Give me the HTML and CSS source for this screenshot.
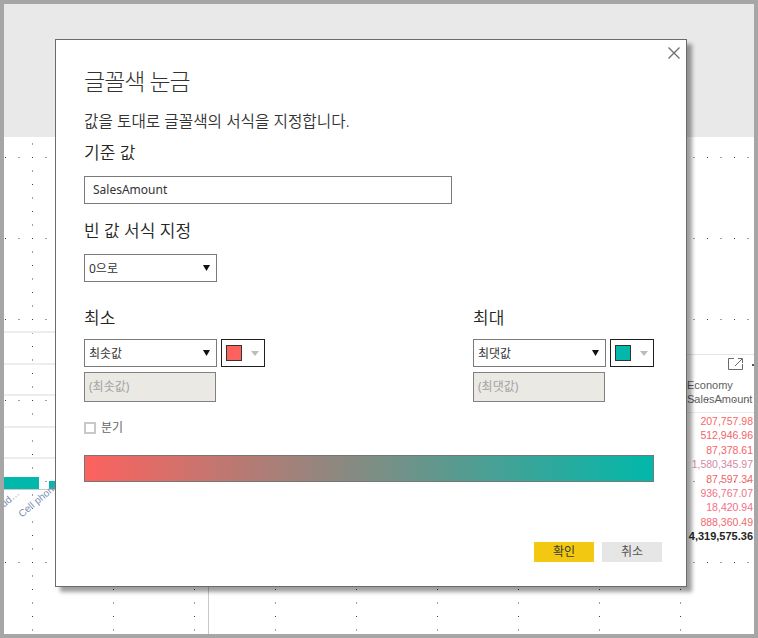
FILE: index.html
```html
<!DOCTYPE html>
<html lang="ko">
<head>
<meta charset="utf-8">
<title>글꼴색 눈금</title>
<link rel="stylesheet" href="styles.css">
</head>
<body>
<div class="screen">
  <div class="workspace">
    <div class="topbar"></div>
    <div class="canvas">
      <div class="chart-visual">
        <div class="gridlines">
          <div class="row-line"></div>
          <div class="row-line"></div>
          <div class="row-line"></div>
          <div class="row-line"></div>
          <div class="row-line"></div>
        </div>
        <div class="bars">
          <div class="bar bar-a"></div>
          <div class="bar bar-b"></div>
        </div>
        <div class="axis"></div>
        <div class="axis-labels">
          <span class="axis-label label-a">ud…</span>
          <span class="axis-label label-b">Cell phones</span>
        </div>
      </div>
      <div class="vdivider"></div>
      <div class="table-visual">
        <div class="tv-header">
          <svg class="focus-icon" width="15" height="12" viewBox="0 0 15 12"><path d="M6 0.5 H0.5 V11.5 H14.5 V6" fill="none" stroke="#6a6a6a" stroke-width="1"/><path d="M7 8 L14 1 M10 0.5 H14.5 V5" fill="none" stroke="#6a6a6a" stroke-width="1"/></svg>
          <svg class="more-icon" width="14" height="4" viewBox="0 0 14 4"><rect x="0" y="1" width="2" height="2" fill="#555"/><rect x="5" y="1" width="2" height="2" fill="#555"/><rect x="10" y="1" width="2" height="2" fill="#555"/></svg>
        </div>
        <div class="tv-colhead">Economy<br>SalesAmount</div>
        <div class="tv-values">
          <div class="v1">207,757.98</div>
          <div class="v2">512,946.96</div>
          <div class="v3">87,378.61</div>
          <div class="v4">1,580,345.97</div>
          <div class="v5">87,597.34</div>
          <div class="v6">936,767.07</div>
          <div class="v7">18,420.94</div>
          <div class="v8">888,360.49</div>
          <div class="total">4,319,575.36</div>
        </div>
      </div>
    </div>
  </div>

  <div class="dialog">
    <button class="close" aria-label="닫기"><svg width="12" height="12" viewBox="0 0 12 12"><path d="M0.5 0.5 L11.5 11.5 M11.5 0.5 L0.5 11.5" stroke="#6e6e6e" stroke-width="1.3" fill="none"/></svg></button>
    <h1 class="title">글꼴색 눈금</h1>
    <p class="desc">값을 토대로 글꼴색의 서식을 지정합니다.</p>

    <div class="label label-base">기준 값</div>
    <div class="textbox">SalesAmount</div>

    <div class="label label-blank">빈 값 서식 지정</div>
    <div class="select select-blank"><span>0으로</span><svg class="arrow" width="7" height="6" viewBox="0 0 7 6"><polygon points="0,0 7,0 3.5,6" fill="#111"/></svg></div>

    <div class="minmax">
      <div class="range-col">
        <div class="label">최소</div>
        <div class="controls">
          <div class="select"><span>최솟값</span><svg class="arrow" width="7" height="6" viewBox="0 0 7 6"><polygon points="0,0 7,0 3.5,6" fill="#111"/></svg></div>
          <div class="swatch"><span class="chip chip-min"></span><svg class="mini-arrow" width="8" height="5" viewBox="0 0 8 5"><polygon points="0,0 8,0 4,5" fill="#bdbdbd"/></svg></div>
        </div>
        <div class="disabled">(최솟값)</div>
      </div>
      <div class="range-col">
        <div class="label">최대</div>
        <div class="controls">
          <div class="select"><span>최댓값</span><svg class="arrow" width="7" height="6" viewBox="0 0 7 6"><polygon points="0,0 7,0 3.5,6" fill="#111"/></svg></div>
          <div class="swatch"><span class="chip chip-max"></span><svg class="mini-arrow" width="8" height="5" viewBox="0 0 8 5"><polygon points="0,0 8,0 4,5" fill="#bdbdbd"/></svg></div>
        </div>
        <div class="disabled">(최댓값)</div>
      </div>
    </div>

    <div class="check"><span class="box"></span><span class="check-text">분기</span></div>

    <div class="gradient"></div>

    <div class="actions">
      <button class="btn btn-ok">확인</button>
      <button class="btn btn-cancel">취소</button>
    </div>
  </div>
</div>
</body>
</html>
```

FILE: styles.css
```css
* { box-sizing: border-box; }

body {
  margin: 0;
  font-family: "Noto Sans", "Noto Sans CJK KR", sans-serif;
  color: #252423;
}

.screen {
  position: relative;
  width: 758px;
  height: 638px;
  background: #a6a6a6;
  padding: 4px;
  overflow: hidden;
}

.workspace {
  display: flex;
  flex-direction: column;
  height: 100%;
}

.topbar {
  flex: none;
  height: 133px;
  background: #e9e9e9;
}

.canvas {
  flex: 1;
  position: relative;
  overflow: hidden;
  background-color: #ffffff;
  background-image:
    conic-gradient(at 1px 1px, transparent 75%, #3a3a3a 0),
    conic-gradient(at 1px 1px, transparent 75%, #3a3a3a 0);
  background-size: 81px 13.5px, 13.5px 81px;
  background-position: 28px 20px, 28px 20px;
}

/* left chart visual (behind dialog) */
.chart-visual {
  position: absolute;
  left: 0;
  top: 194px;
  width: 70px;
  display: flex;
  flex-direction: column;
}

.gridlines {
  display: flex;
  flex-direction: column;
  gap: 29.5px;
}

.row-line {
  height: 2px;
  background: #ededed;
}

.bars {
  display: flex;
  align-items: flex-end;
  gap: 10px;
  height: 12px;
  margin-top: 18px;
}

.bar { background: #01b8aa; }
.bar-a { width: 35px; height: 12px; }
.bar-b { width: 20px; height: 8px; }

.axis {
  height: 1px;
  background: #c8c8c8;
}

.axis-labels {
  position: relative;
  height: 40px;
}

.axis-label {
  position: absolute;
  font-family: "Liberation Sans", sans-serif;
  font-size: 10px;
  line-height: 12px;
  color: #7b8db0;
  white-space: nowrap;
  transform-origin: 0 100%;
  transform: rotate(-40deg);
}

.label-a { left: 2px; top: 8px; }
.label-b { left: 20px; top: 18px; }

.vdivider {
  position: absolute;
  left: 204px;
  top: 0;
  bottom: 0;
  width: 1px;
  background: #c9c9c9;
}

/* right table visual */
.table-visual {
  position: absolute;
  left: 660px;
  right: 0;
  top: 217px;
  border-top: 1px solid #e4e4e4;
  font-family: "Liberation Sans", sans-serif;
}

.tv-header {
  height: 18px;
  display: flex;
  justify-content: flex-end;
  align-items: flex-start;
  gap: 9px;
  padding-top: 3px;
  margin-right: -12px;
}

.more-icon { margin-top: 5px; }

.tv-colhead {
  padding-left: 23px;
  padding-top: 6px;
  font-size: 11px;
  line-height: 13.5px;
  color: #605e5c;
  border-bottom: 1px solid #ececec;
  padding-bottom: 6px;
}

.tv-values {
  padding-top: 1px;
  padding-right: 1px;
  text-align: right;
  font-size: 10.5px;
  line-height: 14.4px;
  white-space: nowrap;
}

.v1 { color: #f76767; }
.v2 { color: #f26469; }
.v3 { color: #f56464; }
.v4 { color: #d48aa2; }
.v5 { color: #f66262; }
.v6 { color: #ef7285; }
.v7 { color: #f56e86; }
.v8 { color: #f0696f; }
.total { color: #252423; font-weight: bold; font-size: 11px; }

/* dialog */
.dialog {
  position: absolute;
  left: 55px;
  top: 39px;
  width: 632px;
  height: 548px;
  background: #ffffff;
  border: 1px solid #6b6b6b;
  box-shadow: 5px 5px 4px rgba(0, 0, 0, 0.38);
  padding: 25px 32px 24px 28px;
  display: flex;
  flex-direction: column;
  align-items: flex-start;
}

.close {
  position: absolute;
  top: 7px;
  right: 6px;
  width: 12px;
  height: 12px;
  padding: 0;
  border: 0;
  background: transparent;
  display: flex;
}

.title {
  margin: 0;
  font-size: 23px;
  letter-spacing: -1px;
  line-height: 32px;
  font-weight: 300;
  color: #333333;
}

.desc {
  margin: 14px 0 0;
  font-size: 15.7px;
  line-height: 20px;
  font-weight: 350;
  color: #333333;
}

.label {
  font-size: 17px;
  line-height: 24px;
  font-weight: 350;
  color: #252423;
}

.label-base { margin-top: 9.5px; }
.label-blank { margin-top: 14.5px; }

.textbox {
  margin-top: 11.5px;
  width: 368px;
  height: 28px;
  border: 1px solid #7a7a7a;
  padding-left: 8px;
  font-size: 12px;
  line-height: 26px;
  color: #333333;
}

.select {
  width: 133px;
  height: 28px;
  border: 1px solid #7a7a7a;
  padding: 0 6px 0 4px;
  display: flex;
  align-items: center;
  justify-content: space-between;
  font-size: 12px;
  color: #333333;
  background: #ffffff;
}

.select-blank { margin-top: 11.5px; }

.minmax {
  margin-top: 23.5px;
  width: 570px;
  display: flex;
  justify-content: space-between;
}

.range-col {
  width: 181px;
  display: flex;
  flex-direction: column;
}

.controls {
  margin-top: 9.5px;
  display: flex;
  gap: 4px;
}

.swatch {
  width: 44px;
  height: 28px;
  border: 1px solid #1f1f1f;
  padding-left: 4px;
  display: flex;
  align-items: center;
  gap: 9px;
}

.chip {
  width: 16px;
  height: 16px;
  border: 1px solid #333333;
}

.chip-min { background: #fd625e; }
.chip-max { background: #01b8aa; }

.disabled {
  margin-top: 5px;
  width: 132px;
  height: 30px;
  border: 1px solid #808080;
  background: #eae9e3;
  padding-left: 4px;
  font-size: 12px;
  line-height: 28px;
  color: #a3a3a3;
}

.check {
  margin-top: 18px;
  height: 16px;
  display: flex;
  align-items: center;
  gap: 5px;
}

.box {
  width: 12px;
  height: 12px;
  border: 2px solid #c8c8c8;
  background: #ffffff;
}

.check-text {
  font-size: 12px;
  line-height: 16px;
  color: #666666;
}

.gradient {
  margin-top: 19px;
  width: 570px;
  height: 27px;
  border: 1px solid #777777;
  background: linear-gradient(to right, #fd625e, #01b8aa);
}

.actions {
  margin-top: 60px;
  align-self: stretch;
  margin-right: -8px;
  display: flex;
  justify-content: flex-end;
  gap: 8px;
}

.btn {
  width: 60px;
  height: 20px;
  border: 0;
  padding: 0;
  font-family: "Noto Sans", "Noto Sans CJK KR", sans-serif;
  font-size: 12px;
  line-height: 20px;
}

.btn-ok { background: #f2c811; color: #3a3a3a; }
.btn-cancel { background: #e6e6e6; color: #555555; }
```
